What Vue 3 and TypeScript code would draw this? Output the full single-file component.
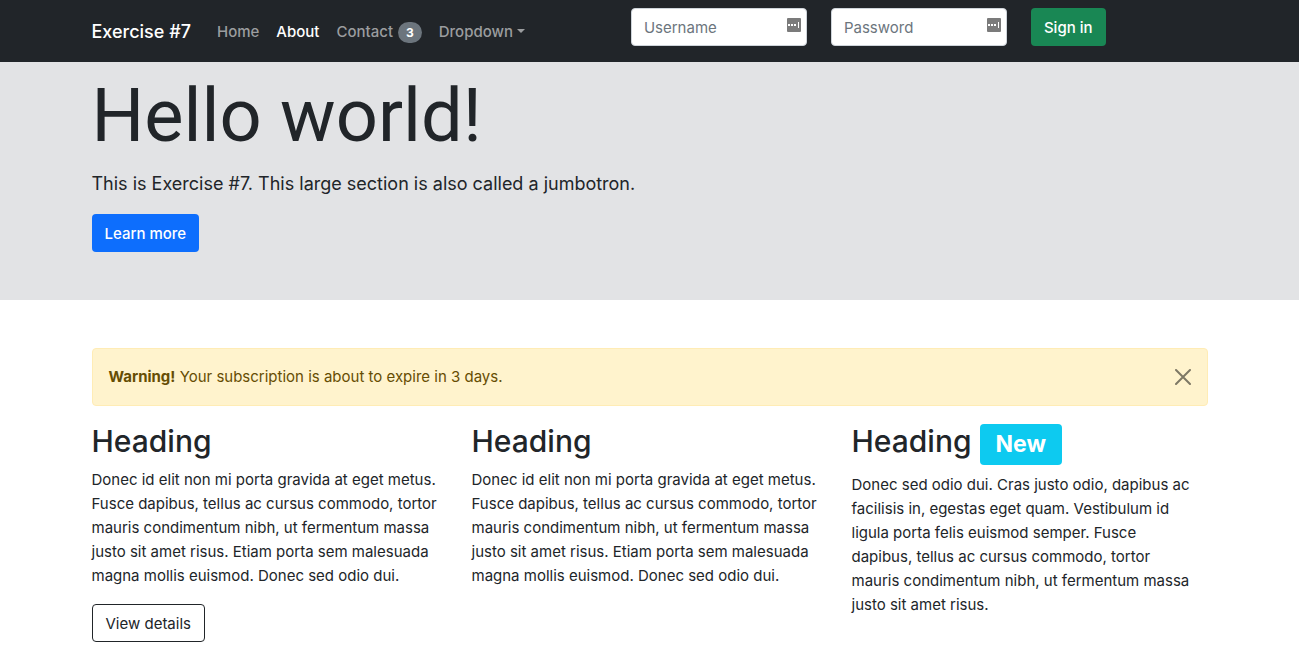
<script setup lang="ts">
import { ref } from 'vue'

interface NavItem {
  label: string
  active?: boolean
  badge?: number
  dropdown?: boolean
}

interface Column {
  title: string
  text: string
  badge?: string
  action?: string
}

const navItems: NavItem[] = [
  { label: 'Home' },
  { label: 'About', active: true },
  { label: 'Contact', badge: 3 },
  { label: 'Dropdown', dropdown: true },
]

const fields = [
  { id: 'username', label: 'Username', type: 'text' },
  { id: 'password', label: 'Password', type: 'password' },
]

const lorem =
  'Donec id elit non mi porta gravida at eget metus. Fusce dapibus, tellus ac cursus commodo, tortor mauris condimentum nibh, ut fermentum massa justo sit amet risus. Etiam porta sem malesuada magna mollis euismod. Donec sed odio dui.'

const columns: Column[] = [
  { title: 'Heading', text: lorem, action: 'View details' },
  { title: 'Heading', text: lorem },
  {
    title: 'Heading',
    badge: 'New',
    text: 'Donec sed odio dui. Cras justo odio, dapibus ac facilisis in, egestas eget quam. Vestibulum id ligula porta felis euismod semper. Fusce dapibus, tellus ac cursus commodo, tortor mauris condimentum nibh, ut fermentum massa justo sit amet risus.',
  },
]

const showAlert = ref(true)
</script>

<template>
  <div class="page">
    <nav class="navbar">
      <div class="container bar">
        <a class="brand" href="#">Exercise #7</a>
        <ul class="links">
          <li v-for="item in navItems" :key="item.label">
            <a href="#" class="link" :class="{ active: item.active, toggle: item.dropdown }">{{ item.label }}<span v-if="item.badge" class="count">{{ item.badge }}</span></a>
          </li>
        </ul>
        <form class="signin" @submit.prevent>
          <div v-for="field in fields" :key="field.id" class="field">
            <input :id="field.id" :type="field.type" :placeholder="field.label" :aria-label="field.label" />
            <svg class="key" viewBox="0 0 16 16" aria-hidden="true">
              <rect x="1" y="1" width="14" height="14" rx="1" fill="#7b7b7b" />
              <path fill="#fff" d="M2 7h2v2H2zM5 7h2v2H5zM8 7h2v2H8zM12 5h1v6h-1z" />
            </svg>
          </div>
          <button type="submit" class="btn success">Sign in</button>
        </form>
      </div>
    </nav>

    <header class="hero">
      <div class="container">
        <h1>Hello world!</h1>
        <p class="lead">This is Exercise #7. This large section is also called a jumbotron.</p>
        <button type="button" class="btn primary">Learn more</button>
      </div>
    </header>

    <main class="container">
      <div v-if="showAlert" class="alert" role="alert">
        <p><strong>Warning!</strong> Your subscription is about to expire in 3 days.</p>
        <button type="button" class="close" aria-label="Close" @click="showAlert = false">
          <svg viewBox="0 0 16 16" aria-hidden="true"><path d="M1 1l14 14M15 1L1 15" fill="none" stroke="currentColor" stroke-width="2" stroke-linecap="round" /></svg>
        </button>
      </div>
      <div class="columns">
        <section v-for="(column, index) in columns" :key="index">
          <h2>{{ column.title }} <span v-if="column.badge" class="new">{{ column.badge }}</span></h2>
          <p>{{ column.text }}</p>
          <button v-if="column.action" type="button" class="btn outline">{{ column.action }}</button>
        </section>
      </div>
    </main>
  </div>
</template>

<style>
body {
  margin: 0;
  background: #fff;
}
</style>

<style scoped>
* {
  box-sizing: border-box;
}
.page {
  font-family: Inter, "Liberation Sans", sans-serif;
  font-size: 15px;
  line-height: 24px;
  color: #212529;
}
.container {
  max-width: 1140px;
  margin: 0 auto;
  padding: 0 12px;
}
.navbar {
  background: #212529;
  padding: 8px 0;
}
.bar {
  display: flex;
  align-items: center;
}
.brand {
  margin-right: 18px;
  padding-top: 2px;
  font-size: 18px;
  font-weight: 500;
  line-height: 30px;
  color: #fff;
  text-decoration: none;
  white-space: nowrap;
}
.links {
  display: flex;
  flex: 1;
  gap: 1px;
  margin: 0;
  padding: 2px 0 0;
  list-style: none;
}
.link {
  display: block;
  padding: 8px;
  color: #9b9d9f;
  font-weight: 500;
  text-decoration: none;
  white-space: nowrap;
}
.link.active {
  color: #fff;
}
.toggle::after {
  content: "";
  display: inline-block;
  margin-left: 4px;
  vertical-align: 4px;
  border: 4px solid transparent;
  border-top-color: currentColor;
  border-bottom: 0;
}
.count {
  display: inline-block;
  margin-left: 5px;
  padding: 4px 8px;
  border-radius: 12px;
  background: #6c757d;
  color: #fff;
  font-size: 12px;
  font-weight: 700;
  line-height: 13px;
}
.signin {
  display: flex;
  gap: 24px;
  margin: 0 102px 8px 0;
}
.field {
  position: relative;
  width: 176px;
}
input {
  display: block;
  width: 100%;
  height: 38px;
  padding: 6px 34px 6px 12px;
  border: 1px solid #ced4da;
  border-radius: 4px;
  background: #fff;
  font: inherit;
  color: #212529;
}
input::placeholder {
  color: #6c757d;
  opacity: 1;
}
.key {
  position: absolute;
  top: 9px;
  right: 5px;
  width: 16px;
  height: 16px;
}
.btn {
  padding: 7px 12px 5px;
  border: 1px solid transparent;
  border-radius: 4px;
  font: inherit;
  font-weight: 500;
  color: #fff;
  white-space: nowrap;
  cursor: pointer;
}
.success {
  background: #198754;
}
.primary {
  background: #0d6efd;
}
.outline {
  background: transparent;
  border-color: #212529;
  padding: 7px 13px 5px;
  font-weight: 400;
  color: #212529;
}
.hero {
  margin-bottom: 48px;
  padding: 6px 0 48px;
  background: #e2e3e5;
}
h1 {
  margin: 0 0 4px;
  font-family: Roboto, "Liberation Sans", sans-serif;
  font-size: 74px;
  font-weight: 400;
  line-height: 96px;
}
.lead {
  margin: 0 0 14px;
  font-size: 18px;
  line-height: 32px;
}
.alert {
  display: flex;
  justify-content: space-between;
  align-items: center;
  margin-bottom: 16px;
  padding: 16px;
  border: 1px solid #ffecb5;
  border-radius: 4px;
  background: #fff3cd;
  color: #664d03;
}
.alert p {
  margin: 0;
}
.close {
  width: 16px;
  height: 16px;
  padding: 0;
  border: 0;
  background: none;
  color: #000;
  opacity: 0.5;
  cursor: pointer;
}
.close svg {
  display: block;
}
.columns {
  display: grid;
  grid-template-columns: repeat(3, 1fr);
  gap: 24px;
}
h2 {
  margin: 0 0 8px;
  font-size: 30px;
  font-weight: 500;
  line-height: 38px;
}
section p {
  margin: 0 0 16px;
  padding-right: 8px;
}
.new {
  display: inline-block;
  padding: 11px 16px;
  border-radius: 4px;
  background: #0dcaf0;
  color: #fff;
  font-size: 23px;
  font-weight: 700;
  line-height: 19px;
}
</style>
